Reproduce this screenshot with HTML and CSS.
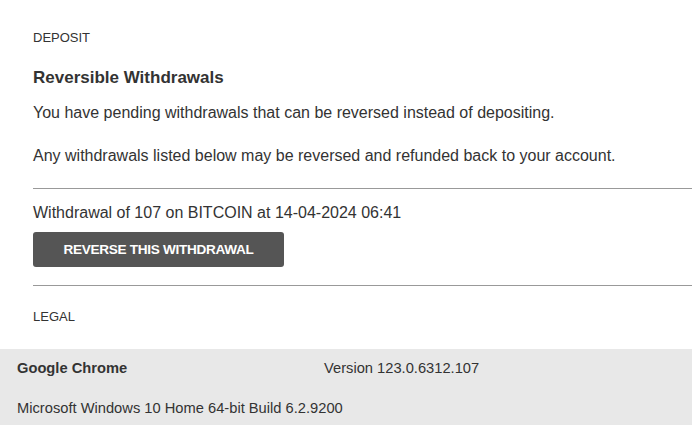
FILE: index.html
```html
<!DOCTYPE html>
<html>
<head>
<meta charset="utf-8">
<link rel="stylesheet" href="styles.css">
</head>
<body>
<main class="content">
  <div class="section-label deposit">DEPOSIT</div>
  <h2 class="title">Reversible Withdrawals</h2>
  <p class="text p1">You have pending withdrawals that can be reversed instead of depositing.</p>
  <p class="text p2">Any withdrawals listed below may be reversed and refunded back to your account.</p>
  <hr class="rule">
  <div class="item">
    <div class="text item-text">Withdrawal of 107 on BITCOIN at 14-04-2024 06:41</div>
    <button class="btn">REVERSE THIS WITHDRAWAL</button>
  </div>
  <hr class="rule rule2">
  <div class="section-label legal">LEGAL</div>
</main>
<footer class="footer">
  <div class="row">
    <span class="app">Google Chrome</span>
    <span class="version">Version 123.0.6312.107</span>
  </div>
  <div class="row os">Microsoft Windows 10 Home 64-bit Build 6.2.9200</div>
</footer>
</body>
</html>
```
FILE: styles.css
```css
html, body {
  margin: 0;
  padding: 0;
  background: #fff;
  font-family: "Liberation Sans", Arial, sans-serif;
  color: #333;
  width: 692px;
  height: 425px;
  overflow: hidden;
}
.content {
  padding-left: 33px;
  height: 349px;
}
.section-label {
  font-size: 13px;
  line-height: 16px;
}
.deposit {
  padding-top: 30px;
}
.title {
  margin: 22px 0 0 0;
  font-size: 17px;
  line-height: 20px;
  font-weight: bold;
}
.text {
  font-size: 16px;
  line-height: 20px;
  margin: 0;
}
.p1 { margin-top: 15px; }
.p2 { margin-top: 23px; }
.rule {
  margin: 22px 0 0 0;
  border: 0;
  border-top: 1px solid #999;
  height: 0;
}
.item-text {
  margin-top: 14px;
}
.btn {
  display: block;
  margin-top: 9px;
  width: 251px;
  height: 35px;
  background: #555;
  color: #fff;
  border: 0;
  border-radius: 3px;
  font-family: "Liberation Sans", Arial, sans-serif;
  font-weight: bold;
  font-size: 13.6px;
  letter-spacing: -0.3px;
  padding: 0;
}
.rule2 { margin-top: 18px; }
.legal { margin-top: 23px; }
.footer {
  background: #e8e8e8;
  height: 76px;
  padding: 0 17px;
  font-size: 14.7px;
  color: #333;
}
.row {
  display: flex;
  line-height: 18px;
}
.row:first-child {
  padding-top: 10px;
}
.app {
  font-weight: bold;
  width: 307px;
}
.os {
  margin-top: 22px;
}
```
